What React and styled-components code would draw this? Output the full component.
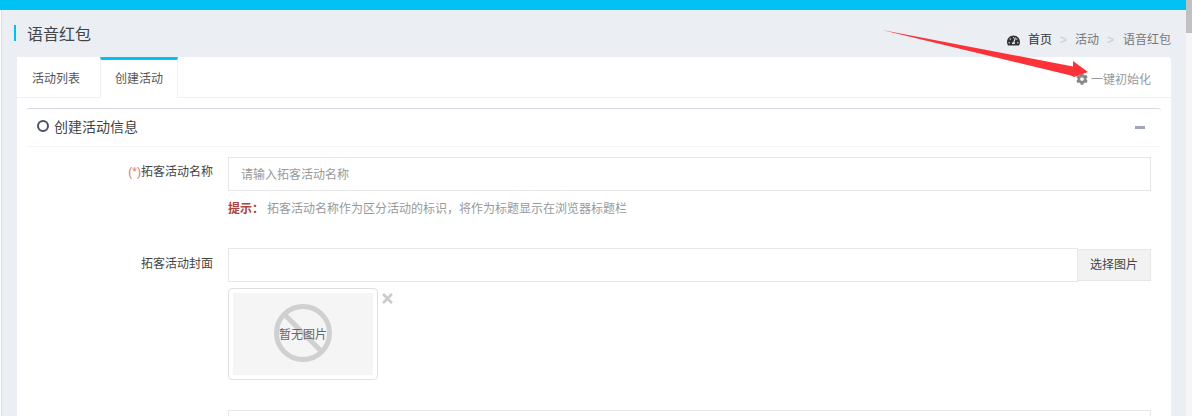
import React from "react";
import styled, { createGlobalStyle } from "styled-components";
import { FaTachometerAlt, FaCog, FaTimes } from "react-icons/fa";

const GlobalStyle = createGlobalStyle`
  html, body {
    margin: 0;
    padding: 0;
    height: 416px;
    overflow: hidden;
    background: #fff;
    font-family: "Liberation Sans", "Noto Sans CJK SC", sans-serif;
    font-size: 12px;
    color: #333;
  }
`;

const Shell = styled.div`
  width: 1192px;
  height: 416px;
  overflow: hidden;
  display: flex;
  position: relative;
`;
const Content = styled.div`
  flex: 1;
  min-width: 0;
  display: flex;
  flex-direction: column;
`;
const TopBar = styled.div`
  height: 10px;
  flex: none;
  background: #00c1f3;
`;
const Main = styled.div`
  flex: 1;
  min-height: 0;
  background: #ebeef3;
  margin-left: 1px;
  border-left: 1px solid #d9dce3;
  padding: 0 15px;
`;
const Scrollbar = styled.div`
  width: 6px;
  flex: none;
  background: #f5f5f5;
`;
const Thumb = styled.div`
  height: 33px;
  background: #c1c1c1;
`;
const PageHead = styled.div`
  height: 47px;
  display: flex;
  justify-content: space-between;
  align-items: flex-start;
`;
const PageTitle = styled.h1`
  margin: 15px 0 0 -3px;
  padding-left: 11px;
  height: 16px;
  border-left: 2px solid #00c1f3;
  font-size: 16px;
  font-weight: 400;
  line-height: 20px;
  color: #444;
`;
const Crumbs = styled.div`
  margin-top: 22px;
  display: flex;
  align-items: center;
  line-height: 16px;
  color: #777;
`;
const CrumbHome = styled.span`
  display: flex;
  align-items: center;
  gap: 8px;
  color: #333;
`;
const CrumbSep = styled.span`
  color: #ccc;
  margin: 0 ${(p) => (p.$wide ? "9px" : "8px")} 0 8px;
`;
const Card = styled.div`
  background: #fff;
  border-radius: 3px 3px 0 0;
  height: 359px;
`;
const Tabs = styled.div`
  height: 40px;
  display: flex;
  align-items: stretch;
  justify-content: space-between;
  border-bottom: 1px solid #f0f1f3;
`;
const TabList = styled.div`
  display: flex;
  gap: 5px;
`;
const Tab = styled.div`
  width: 78px;
  box-sizing: border-box;
  display: flex;
  align-items: center;
  padding: 0 14px 3px;
  color: #555;
  height: ${(p) => (p.$active ? "41px" : "40px")};
  border-top: 3px solid ${(p) => (p.$active ? "#00c1f3" : "transparent")};
  border-left: 1px solid ${(p) => (p.$active ? "#f0f1f3" : "transparent")};
  border-right: 1px solid ${(p) => (p.$active ? "#f0f1f3" : "transparent")};
  background: #fff;
`;
const InitLink = styled.div`
  display: flex;
  align-items: center;
  gap: 3px;
  padding: 3px 20px 0 0;
  color: #999;
  svg {
    color: #888;
  }
`;
const Panel = styled.div`
  margin: 10px 10px 0 10px;
  border-top: 1px solid #d6d9e1;
  border-radius: 3px;
`;
const PanelHead = styled.div`
  height: 37px;
  display: flex;
  align-items: center;
  justify-content: space-between;
  padding: 0 16px 0 10px;
  border-bottom: 1px solid #f3f4f6;
`;
const PanelTitle = styled.div`
  display: flex;
  align-items: center;
  gap: 5px;
  padding-bottom: 4px;
  font-size: 14px;
  color: #444;
`;
const Ring = styled.span`
  width: 12px;
  height: 12px;
  box-sizing: border-box;
  border: 2px solid #4a5261;
  border-radius: 50%;
`;
const Collapse = styled.span`
  width: 10px;
  height: 3px;
  background: #a0a6ba;
`;
const Row = styled.div`
  display: flex;
  align-items: flex-start;
`;
const FirstRow = styled(Row)`
  padding-top: 10px;
  height: 91px;
`;
const CoverRow = styled(Row)`
  height: 162px;
`;
const Label = styled.label`
  width: 186px;
  flex: none;
  text-align: right;
  line-height: 30px;
  padding-top: ${(p) => p.$offset || "0"};
  color: #444;
`;
const Star = styled.span`
  color: #e0766b;
`;
const Field = styled.div`
  margin-left: 15px;
  width: 923px;
`;
const TextInput = styled.div`
  box-sizing: border-box;
  height: ${(p) => p.$height || "34px"};
  border: 1px solid #e5e6e7;
  padding: 0 12px 2px;
  display: flex;
  align-items: center;
  color: #999;
  font-size: 12px;
`;
const Hint = styled.div`
  margin-top: 10px;
  line-height: 16px;
  color: #999;
`;
const HintLabel = styled.b`
  color: #a94442;
  margin-right: 3px;
`;
const InputGroup = styled.div`
  display: flex;
  align-items: flex-start;
`;
const CoverInput = styled(TextInput)`
  flex: 1;
`;
const PickButton = styled.div`
  box-sizing: border-box;
  width: 73px;
  height: 32px;
  margin-top: 1px;
  padding-bottom: 3px;
  border: 1px solid #e5e6e7;
  border-left: none;
  background: #f2f2f2;
  color: #444;
  display: flex;
  align-items: center;
  justify-content: center;
`;
const ThumbRow = styled.div`
  margin-top: 6px;
  display: flex;
  align-items: flex-start;
  gap: 2px;
`;
const ImageBox = styled.div`
  box-sizing: border-box;
  width: 150px;
  height: 92px;
  border: 1px solid #e0e0e0;
  border-radius: 4px;
  padding: 4px;
`;
const Placeholder = styled.div`
  height: 82px;
  padding-bottom: 2px;
  box-sizing: border-box;
  background: #f5f5f5;
  position: relative;
  display: flex;
  align-items: center;
  justify-content: center;
  color: #666;
`;
const NoImage = styled.svg`
  position: absolute;
  left: 41px;
  top: 11px;
`;
const PlaceholderText = styled.span`
  position: relative;
`;
const Remove = styled.span`
  color: #ccc;
  margin-top: 3px;
  display: flex;
`;
const Arrow = styled.svg`
  position: absolute;
  left: 0;
  top: 0;
  pointer-events: none;
`;

export default function App() {
  return (
    <Shell>
      <GlobalStyle />
      <Content>
        <TopBar />
        <Main>
          <PageHead>
            <PageTitle>语音红包</PageTitle>
            <Crumbs>
              <CrumbHome>
                <FaTachometerAlt size={13} />
                首页
              </CrumbHome>
              <CrumbSep>&gt;</CrumbSep>
              活动
              <CrumbSep $wide>&gt;</CrumbSep>
              语音红包
            </Crumbs>
          </PageHead>
          <Card>
            <Tabs>
              <TabList>
                <Tab>活动列表</Tab>
                <Tab $active>创建活动</Tab>
              </TabList>
              <InitLink>
                <FaCog size={12} />
                一键初始化
              </InitLink>
            </Tabs>
            <Panel>
              <PanelHead>
                <PanelTitle>
                  <Ring />
                  创建活动信息
                </PanelTitle>
                <Collapse />
              </PanelHead>
              <FirstRow>
                <Label>
                  <Star>(*)</Star>拓客活动名称
                </Label>
                <Field>
                  <TextInput>请输入拓客活动名称</TextInput>
                  <Hint>
                    <HintLabel>提示：</HintLabel>
                    拓客活动名称作为区分活动的标识，将作为标题显示在浏览器标题栏
                  </Hint>
                </Field>
              </FirstRow>
              <CoverRow>
                <Label $offset="1px">拓客活动封面</Label>
                <Field>
                  <InputGroup>
                    <CoverInput />
                    <PickButton>选择图片</PickButton>
                  </InputGroup>
                  <ThumbRow>
                    <ImageBox>
                      <Placeholder>
                        <NoImage width="58" height="58" viewBox="0 0 58 58">
                          <circle cx="29" cy="29" r="26.5" fill="none" stroke="#d0d0d0" strokeWidth="5" />
                          <line x1="10" y1="10" x2="48" y2="48" stroke="#d0d0d0" strokeWidth="5" />
                        </NoImage>
                        <PlaceholderText>暂无图片</PlaceholderText>
                      </Placeholder>
                    </ImageBox>
                    <Remove>
                      <FaTimes size={15} />
                    </Remove>
                  </ThumbRow>
                </Field>
              </CoverRow>
              <Row>
                <Label />
                <Field>
                  <TextInput $height="40px" />
                </Field>
              </Row>
            </Panel>
          </Card>
        </Main>
      </Content>
      <Scrollbar>
        <Thumb />
      </Scrollbar>
      <Arrow width="1192" height="416" viewBox="0 0 1192 416">
        <path d="M882 30 L1073 66.5 L1073 61 L1088 72 L1074 77 L1071 75.6 Z" fill="#fb3338" />
      </Arrow>
    </Shell>
  );
}
